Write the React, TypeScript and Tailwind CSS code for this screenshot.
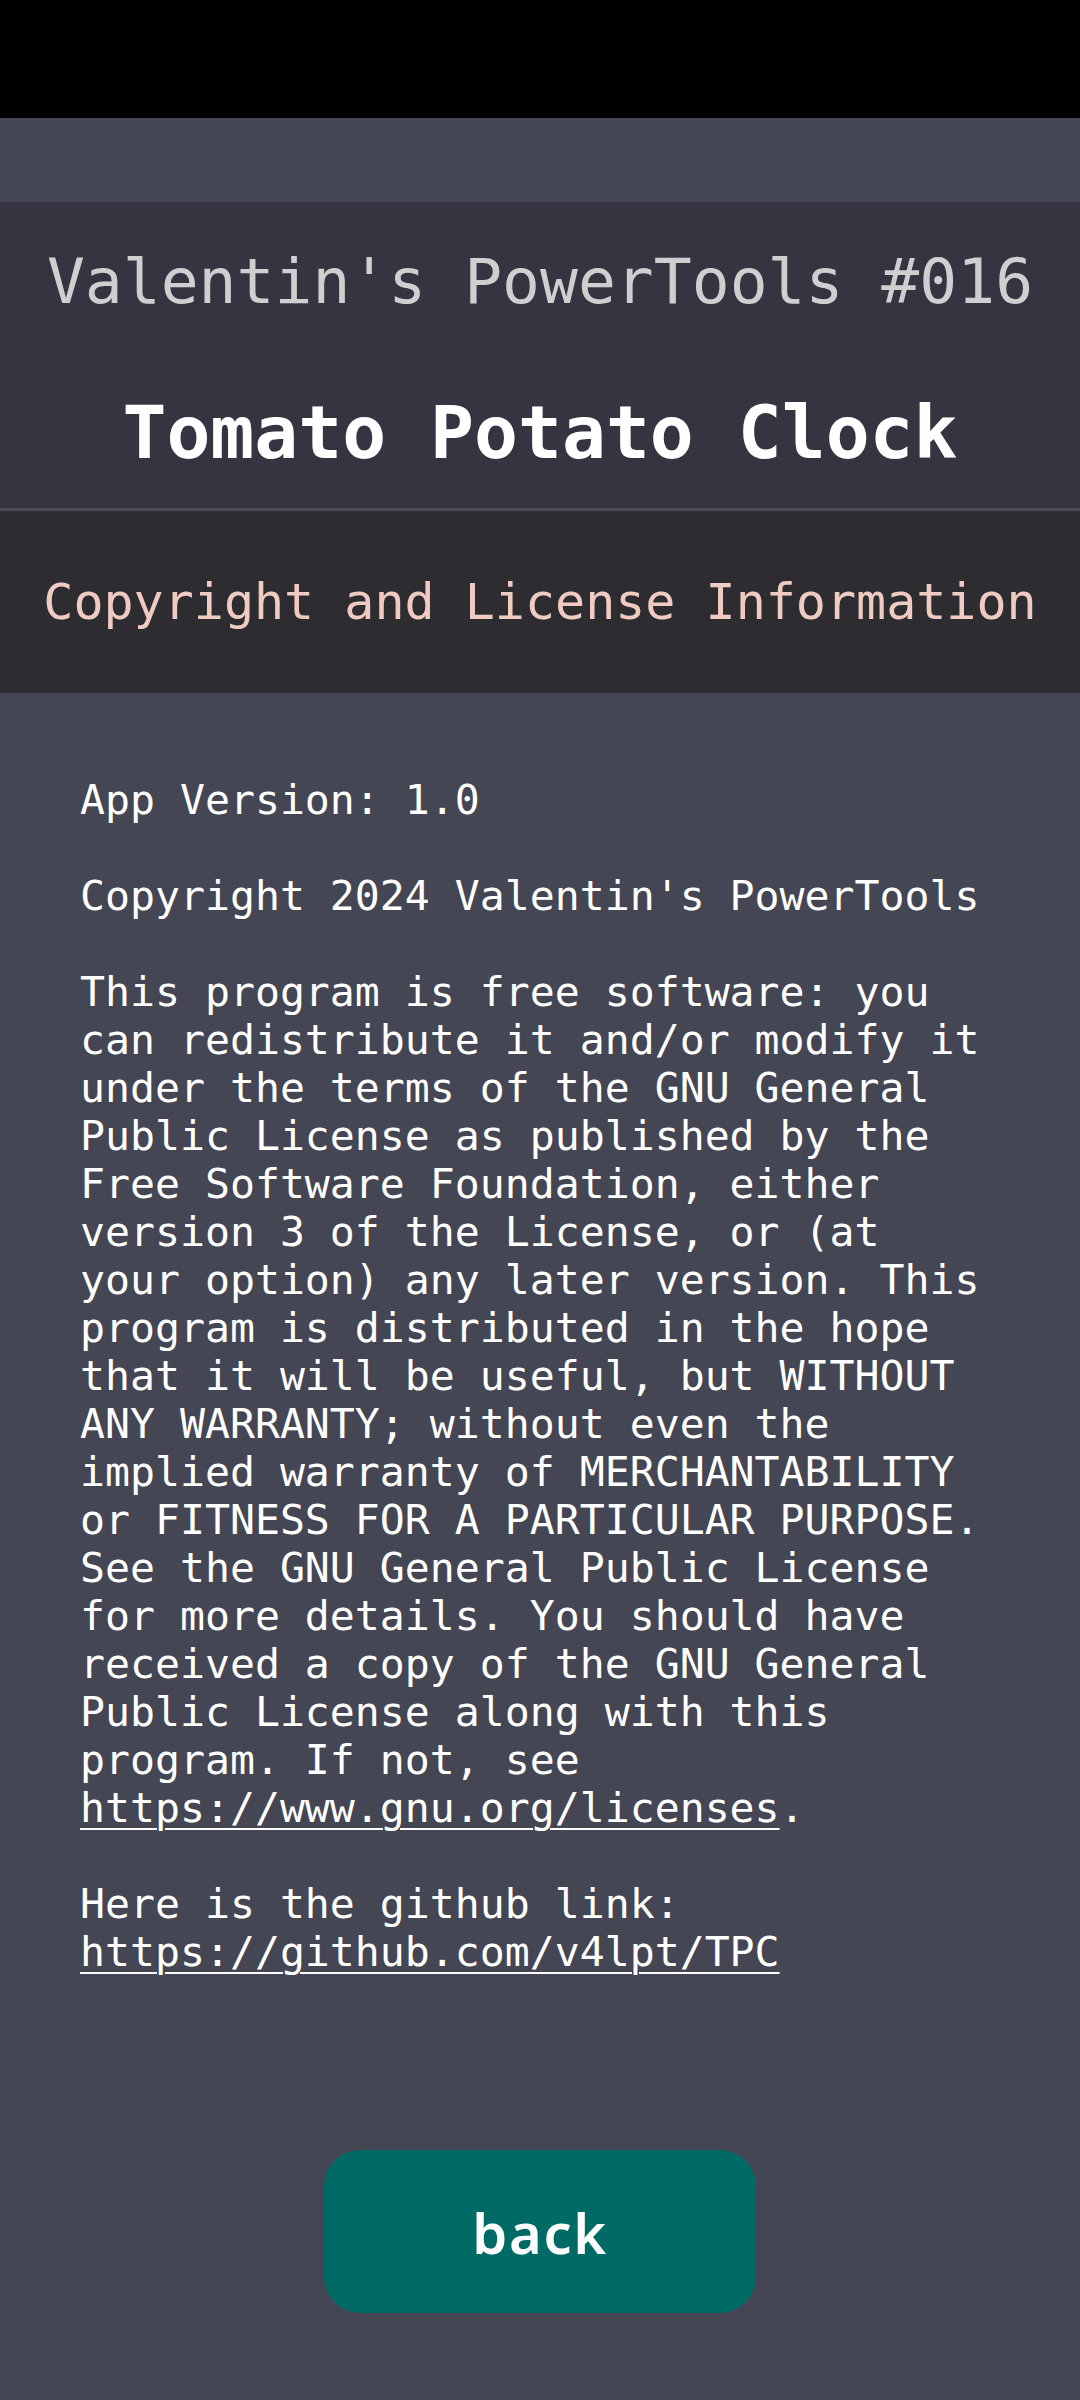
const mono = { fontFamily: '"DejaVu Sans Mono", "Liberation Mono", monospace' };

export default function App() {
    return (
        <div className="min-h-[2400px] bg-[#454654] flex flex-col" style={mono}>
            {/* status bar */}
            <div className="h-[118px] bg-black" />
            {/* app bar */}
            <div className="h-[84px] bg-[#454654]" />

            <header className="h-[306px] bg-[#353542] flex flex-col items-center">
                <h2 className="mt-[43px] text-[63px] leading-[74px] text-[#cfcfcf] whitespace-nowrap">
                    Valentin's PowerTools #016
                </h2>
                <h1 className="mt-[71px] text-[73px] leading-[86px] font-bold text-white whitespace-nowrap">
                    Tomato Potato Clock
                </h1>
            </header>
            <div className="h-[3px] bg-[#4b4b5b]" />

            <div className="h-[182px] bg-[#2c2c31] flex items-center justify-center">
                <h3 className="text-[50px] leading-[58px] text-[#f0cbc2] whitespace-nowrap">
                    Copyright and License Information
                </h3>
            </div>

            <main className="px-[80px] pt-[83px] text-[41.5px] leading-[48px] text-white">
                <p>App Version: 1.0</p>
                <p className="mt-12">Copyright 2024 Valentin's PowerTools</p>
                <p className="mt-12">
                    This program is free software: you can redistribute it and/or modify it under the terms of the GNU General Public License as published by the Free Software Foundation, either version 3 of the License, or (at your option) any later version. This program is distributed in the hope that it will be useful, but WITHOUT ANY WARRANTY; without even the implied warranty of MERCHANTABILITY or FITNESS FOR A PARTICULAR PURPOSE. See the GNU General Public License for more details. You should have received a copy of the GNU General Public License along with this program. If not, see{" "}
                    <a href="#" className="underline underline-offset-[6px] decoration-2">https://www.gnu.org/licenses</a>.
                </p>
                <p className="mt-12">
                    Here is the github link:{" "}
                    <a href="#" className="underline underline-offset-[6px] decoration-2">https://github.com/v4lpt/TPC</a>
                </p>
            </main>

            <div className="flex justify-center mt-[174px]">
                <button
                    className="w-[432px] h-[163px] rounded-[36px] bg-[#006a66] text-white text-[56px] font-semibold tracking-[0.03em]"
                    style={{ fontFamily: '"Noto Sans", "Open Sans", sans-serif' }}
                >
                    back
                </button>
            </div>
        </div>
    );
}
